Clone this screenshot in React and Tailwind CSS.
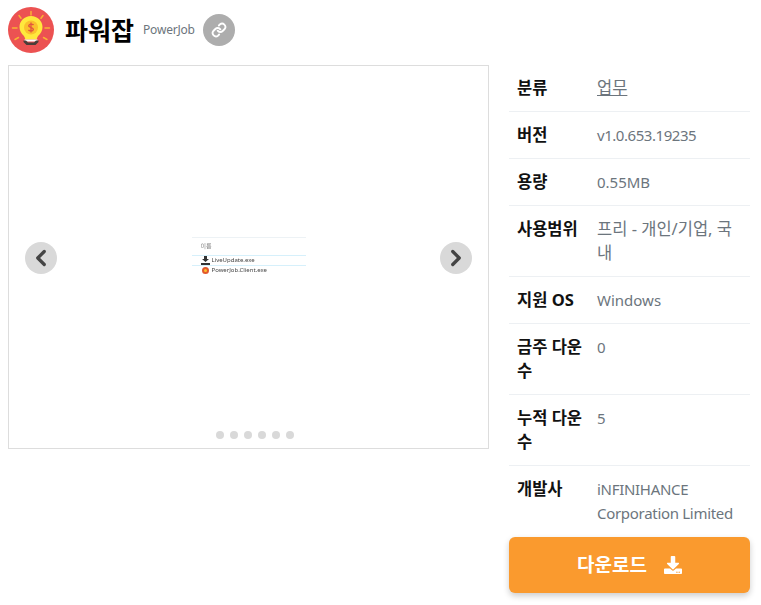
import React from "react";
import { ChevronLeft, ChevronRight } from "lucide-react";

const rows = [
  ["분류", <span className="text-[16.500px] underline">업무</span>],
  ["버전", <span className="tracking-[-0.45px]">v1.0.653.19235</span>],
  ["용량", "0.55MB"],
  ["사용범위", <span className="text-[16.500px]">프리 - 개인/기업, 국내</span>],
  ["지원 OS", "Windows"],
  ["금주 다운수", "0"],
  ["누적 다운수", "5"],
  ["개발사", <span className="block tracking-[-0.3px]">iNFINIHANCE Corporation Limited</span>],
];

function Bulb() {
  return (
    <svg width="46" height="46" viewBox="0 0 46 46">
      <circle cx="23" cy="23" r="23" fill="#ec5252" />
      <g stroke="#f9b233" strokeWidth="1.5" strokeLinecap="round">
        <path d="M23 4.500v3.500M11 8.500l2 2.800M35 8.500l-2 2.800M4.500 21h4.500M37 21h4.500M7 32.500l3.500-2M39 32.500l-3.500-2" />
      </g>
      <path d="M23 9c-6.600 0-11.500 5-11.500 11 0 4 2 6.400 4 8.600 1.100 1.300 1.600 2.500 1.800 4h11.400c.2-1.500.7-2.700 1.800-4 2-2.200 4-4.600 4-8.600 0-6-4.900-11-11.500-11z" fill="#ffe83d" />
      <circle cx="23" cy="20.500" r="7" fill="#fbc02d" />
      <path d="M25.500 18c-.6-.9-4.100-1.500-4.700.5-.6 2.500 5 1.600 4.500 4.100-.4 2-4.100 1.500-4.900.3M23 15.600v9.800" fill="none" stroke="#e2583e" strokeWidth="1.400" />
      <rect x="16.500" y="32.500" width="13" height="2" fill="#fff" />
      <path d="M15.500 33.500h2.500l2 2h6l2-2h2.500v1.500l-3 3h-9l-3-3z" fill="#4a3f3a" />
    </svg>
  );
}

function LinkIcon() {
  return (
    <svg width="16" height="16" viewBox="0 0 24 24" fill="none" stroke="#fff" strokeWidth="2.800" strokeLinecap="round" strokeLinejoin="round">
      <path d="M10 13a5 5 0 0 0 7.500.5l3-3a5 5 0 0 0-7-7l-1.700 1.700" />
      <path d="M14 11a5 5 0 0 0-7.500-.5l-3 3a5 5 0 0 0 7 7l1.700-1.700" />
    </svg>
  );
}

function DownloadIcon() {
  return (
    <svg width="18" height="18" viewBox="0 0 512 512" fill="#fff">
      <path d="M216 0h80c13.300 0 24 10.700 24 24v168h87.700c17.800 0 26.700 21.500 14.100 34.100L269.700 378.300c-7.500 7.500-19.800 7.500-27.300 0L90.100 226.100c-12.600-12.600-3.700-34.100 14.100-34.100H192V24c0-13.300 10.700-24 24-24zm296 376v112c0 13.300-10.700 24-24 24H24c-13.300 0-24-10.700-24-24V376c0-13.300 10.700-24 24-24h146.700l49 49c20.100 20.100 52.500 20.100 72.600 0l49-49H488c13.300 0 24 10.700 24 24zm-124 88c0-11-9-20-20-20s-20 9-20 20 9 20 20 20 20-9 20-20zm64 0c0-11-9-20-20-20s-20 9-20 20 9 20 20 20 20-9 20-20z" />
    </svg>
  );
}

export default function App() {
  return (
    <div className="h-[605px] w-[761px] overflow-hidden bg-white px-2 pt-[7px] font-['Noto_Sans','Noto_Sans_CJK_KR',sans-serif] text-[15px] leading-6 text-[#6c757d]">
      <div className="flex h-[46px] items-center">
        <Bulb />
        <span className="ml-[11px] text-[25px] leading-8 font-bold text-black">파워잡</span>
        <span className="ml-[9px] text-xs tracking-[-0.2px] text-[#6c757d]">PowerJob</span>
        <span className="ml-2 flex h-8 w-8 items-center justify-center rounded-full bg-[#adadad]">
          <LinkIcon />
        </span>
      </div>

      <div className="mt-3 flex items-start">
        <div className="relative flex h-[384px] w-[481px] flex-col items-center border border-[#dddddd]">
          <div className="mt-[171px] h-[50px] w-[114px] border-t border-[#edf2f5] pt-1 pl-[9px] text-[6px] leading-[9px] text-[#444]">
            <div className="text-[#888] blur-[0.3px]">이름</div>
            <div className="-ml-[9px] mt-1 flex items-center gap-[2px] border-y border-[#d6f0fb] pl-[9px]">
              <svg width="9" height="9" viewBox="0 0 9 9" fill="#333">
                <path d="M3 0h3v3h2L4.500 6 1 3h2zM0 7h9v2H0z" />
              </svg>
              <span className="blur-[0.3px]">LiveUpdate.exe</span>
            </div>
            <div className="-ml-[9px] flex items-center gap-[2px] pl-[9px]">
              <span className="mx-[1px] h-[7px] w-[7px] rounded-full border-2 border-[#e2582c] bg-[#fbc02d]" />
              <span className="blur-[0.3px]">PowerJob.Client.exe</span>
            </div>
          </div>
          <button className="absolute left-4 top-[176px] flex h-8 w-8 items-center justify-center rounded-full bg-[#d9d9d9] text-[#444]">
            <ChevronLeft size={26} strokeWidth={3} />
          </button>
          <button className="absolute right-4 top-[176px] flex h-8 w-8 items-center justify-center rounded-full bg-[#d9d9d9] text-[#444]">
            <ChevronRight size={26} strokeWidth={3} />
          </button>
          <div className="absolute bottom-[9px] left-0 right-0 flex justify-center gap-[6px] pl-3">
            {[0, 1, 2, 3, 4, 5].map((i) => (
              <span key={i} className="h-2 w-2 rounded-full bg-[#d9d9d9]" />
            ))}
          </div>
        </div>

        <div className="ml-5 w-[241px]">
          <div className="h-[472px] overflow-hidden">
            {rows.map(([k, v]) => (
              <div key={k} className="flex border-b border-[#edf0f3] py-[11px] last:border-b-0">
                <div className="w-[88px] shrink-0 px-2 text-[16.500px] font-bold text-[#111]">{k}</div>
                <div className="min-w-0 flex-1 pr-2">{v}</div>
              </div>
            ))}
          </div>
          <button className="flex h-14 w-full items-center justify-center gap-[17px] rounded-md bg-[#fa9a2e] text-[19px] font-bold text-white shadow-[0_3px_6px_rgba(0,0,0,0.2)]">
            다운로드
            <DownloadIcon />
          </button>
        </div>
      </div>
    </div>
  );
}
